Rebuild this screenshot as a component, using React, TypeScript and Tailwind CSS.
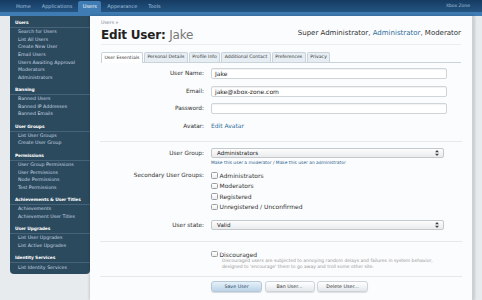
import React from 'react';

const sections = [
  {
    title: 'Users',
    items: [
      'Search for Users',
      'List All Users',
      'Create New User',
      'Email Users',
      'Users Awaiting Approval',
      'Moderators',
      'Administrators',
    ],
  },
  { title: 'Banning', items: ['Banned Users', 'Banned IP Addresses', 'Banned Emails'] },
  { title: 'User Groups', items: ['List User Groups', 'Create User Group'] },
  {
    title: 'Permissions',
    items: ['User Group Permissions', 'User Permissions', 'Node Permissions', 'Test Permissions'],
  },
  { title: 'Achievements & User Titles', items: ['Achievements', 'Achievement User Titles'] },
  { title: 'User Upgrades', items: ['List User Upgrades', 'List Active Upgrades'] },
  { title: 'Identity Services', items: ['List Identity Services'] },
];

const navTabs = ['Home', 'Applications', 'Users', 'Appearance', 'Tools'];

const tabs = [
  'User Essentials',
  'Personal Details',
  'Profile Info',
  'Additional Contact',
  'Preferences',
  'Privacy',
];

function Checkbox() {
  return (
    <span className="inline-block w-[6.5px] h-[6.5px] shrink-0 rounded-[1.5px] border border-[#9a9fa4] bg-gradient-to-b from-white to-[#eceef0]" />
  );
}

function SelectBox({ value }: { value: string }) {
  return (
    <div className="w-[233px] h-[10px] flex items-center justify-between px-[4px] rounded-[2px] border border-[#c3c8cd] bg-gradient-to-b from-[#fdfdfd] to-[#e9ebed] text-[5.6px] text-[#222]">
      <span className="pl-[1px]">{value}</span>
      <svg width="4" height="6" viewBox="0 0 4 6">
        <path d="M2 0 L4 2.3 L0 2.3 Z M2 6 L4 3.7 L0 3.7 Z" fill="#444" />
      </svg>
    </div>
  );
}

function TextInput({ value }: { value?: string }) {
  return (
    <div className="w-[236px] h-[11px] flex items-center px-[3px] rounded-[2px] border border-[#cfd4d8] bg-white shadow-[inset_0_1px_1px_rgba(0,0,0,0.06)] text-[6px] text-[#222]">
      {value}
    </div>
  );
}

function Row({ label, children }: { label: string; children?: React.ReactNode }) {
  return (
    <div className="flex items-center h-[17.5px]">
      <div className="w-[103px] text-right text-[5.8px] text-[#333]">{label}</div>
      <div className="ml-[7px]">{children}</div>
    </div>
  );
}

export default function App() {
  return (
    <div className="w-[482px] h-[300px] overflow-hidden bg-[#e8ebee] font-['DejaVu_Sans','Liberation_Sans',sans-serif] flex flex-col">
      {/* top nav */}
      <div className="h-[12px] shrink-0 flex items-end justify-between bg-gradient-to-b from-[#163b62] to-[#245583] pl-[11px] pr-[12px]">
        <div className="flex items-end h-full gap-[1px]">
          {navTabs.map((t) =>
            t === 'Users' ? (
              <div
                key={t}
                className="h-[11px] px-[4.5px] flex items-center rounded-t-[2px] bg-[#3f7cb3] text-white text-[5px]"
              >
                {t}
              </div>
            ) : (
              <div key={t} className="h-[11px] px-[5px] flex items-center text-[#a5c3de] text-[5px]">
                {t}
              </div>
            )
          )}
        </div>
        <div className="h-full flex items-center text-[4.5px] text-[#a9c3da]">Xbox Zone</div>
      </div>
      <div className="h-[4px] shrink-0 bg-[#3f7cb3]" />

      <div className="flex flex-1 min-h-0 items-start">
        {/* sidebar */}
        <div className="ml-[10px] w-[80px] shrink-0 bg-[#2c4a5e] rounded-b-[4px] pt-[4px] pb-[3px] flex flex-col gap-[6px]">
          {sections.map((s) => (
            <div key={s.title}>
              <div className="h-[8px] flex items-center pl-[5px] border-b border-[#46637a] text-white font-bold text-[4.4px] tracking-[-0.1px] whitespace-nowrap">
                {s.title}
              </div>
              {s.items.map((i) => (
                <div key={i} className="h-[7.57px] flex items-center pl-[8px] text-[#c6d6e2] text-[4.7px]">
                  {i}
                </div>
              ))}
            </div>
          ))}
        </div>

        {/* main panel */}
        <div className="flex-1 self-stretch mr-[8px] bg-[#fbfcfd] border-r-2 border-[#cdd1d5] shadow-[0_0_3px_rgba(0,0,0,0.25)] pt-[4px] px-[11px]">
          <div className="h-[6px] flex items-center text-[4.7px] text-[#7a8590]">Users »</div>
          <div className="mt-[2px] h-[14px] flex items-center justify-between pb-0">
            <div className="text-[12px] leading-none tracking-[-0.2px]">
              <span className="font-semibold text-[#222]">Edit User:</span>{' '}
              <span className="text-[#777]">Jake</span>
            </div>
            <div className="text-[7px] text-[#333] -mt-[3px]">
              Super Administrator, <span className="text-[#2f6d9c]">Administrator</span>, Moderator
            </div>
          </div>
          <div className="mt-[2px] border-b border-[#eceff1]" />

          {/* tabs */}
          <div className="mt-[8px] h-[10px] flex items-end gap-[1px] border-b border-[#c9d3db]">
            {tabs.map((t, idx) => (
              <div
                key={t}
                className={`h-[10px] px-[2.5px] flex items-center rounded-t-[2px] border border-b-0 border-[#c9d3db] text-[4.6px] text-[#333] ${
                  idx === 0 ? 'bg-white -mb-[1px] h-[11px]' : 'bg-[#e6eef4]'
                }`}
              >
                {t}
              </div>
            ))}
          </div>

          {/* form */}
          <div className="mt-[2px]">
            <Row label="User Name:">
              <TextInput value="Jake" />
            </Row>
            <Row label="Email:">
              <TextInput value="jake@xbox-zone.com" />
            </Row>
            <Row label="Password:">
              <TextInput />
            </Row>
            <div className="flex items-center h-[15px]">
              <div className="w-[103px] text-right text-[5.8px] text-[#333] pt-[3px]">Avatar:</div>
              <div className="ml-[7px] text-[6px] text-[#2f6d9c]">Edit Avatar</div>
            </div>
          </div>

          <div className="mt-[8px] border-b border-[#e6e9ec] -mx-[1px]" />

          <div className="mt-[6px] flex items-center h-[11px]">
            <div className="w-[103px] text-right text-[5.8px] text-[#333]">User Group:</div>
            <div className="ml-[7px]">
              <SelectBox value="Administrators" />
            </div>
          </div>
          <div className="ml-[110px] h-[6px] mt-[2px] flex items-center text-[4.4px] text-[#2b5f8f]">
            Make this user a moderator / Make this user an administrator
          </div>

          <div className="mt-[3.5px] flex items-start">
            <div className="w-[103px] h-[10.5px] flex items-center justify-end text-[5.8px] text-[#333]">
              Secondary User Groups:
            </div>
            <div className="ml-[7px] flex flex-col">
              {['Administrators', 'Moderators', 'Registered', 'Unregistered / Unconfirmed'].map((g) => (
                <div key={g} className="h-[10.5px] flex items-center gap-[2px] text-[6px] text-[#333]">
                  <Checkbox />
                  <span>{g}</span>
                </div>
              ))}
            </div>
          </div>

          <div className="mt-[7.5px] flex items-center h-[11px]">
            <div className="w-[103px] text-right text-[5.8px] text-[#333]">User state:</div>
            <div className="ml-[7px]">
              <SelectBox value="Valid" />
            </div>
          </div>

          <div className="mt-[10.5px] border-b border-[#e6e9ec] -mx-[1px]" />

          <div className="ml-[110px] mt-[8.5px]">
            <div className="h-[7px] flex items-center gap-[2px] text-[6px] text-[#333]">
              <Checkbox />
              <span>Discouraged</span>
            </div>
            <div className="ml-[11px] text-[4.5px] leading-[6.5px] text-[#999]">
              <div>Discouraged users are subjected to annoying random delays and failures in system behavior,</div>
              <div>designed to 'encourage' them to go away and troll some other site.</div>
            </div>
          </div>

          <div className="mt-[5px] border-b border-[#e6e9ec] -mx-[1px]" />

          <div className="ml-[110px] mt-[4.5px] flex gap-[2.5px]">
            <div className="w-[51px] h-[10.5px] flex items-center justify-center rounded-[3px] border border-[#b4c8da] bg-gradient-to-b from-[#e6f0f8] to-[#bcd4e8] shadow-[0_1px_1px_rgba(0,0,0,0.15)] text-[4.8px] text-[#2d4c68]">
              Save User
            </div>
            <div className="w-[50px] h-[10.5px] flex items-center justify-center rounded-[3px] border border-[#cdd3d8] bg-gradient-to-b from-white to-[#e4e8ec] shadow-[0_1px_1px_rgba(0,0,0,0.12)] text-[4.8px] text-[#333]">
              Ban User...
            </div>
            <div className="w-[51px] h-[10.5px] flex items-center justify-center rounded-[3px] border border-[#cdd3d8] bg-gradient-to-b from-white to-[#e4e8ec] shadow-[0_1px_1px_rgba(0,0,0,0.12)] text-[4.8px] text-[#333]">
              Delete User...
            </div>
          </div>
        </div>
      </div>
    </div>
  );
}
